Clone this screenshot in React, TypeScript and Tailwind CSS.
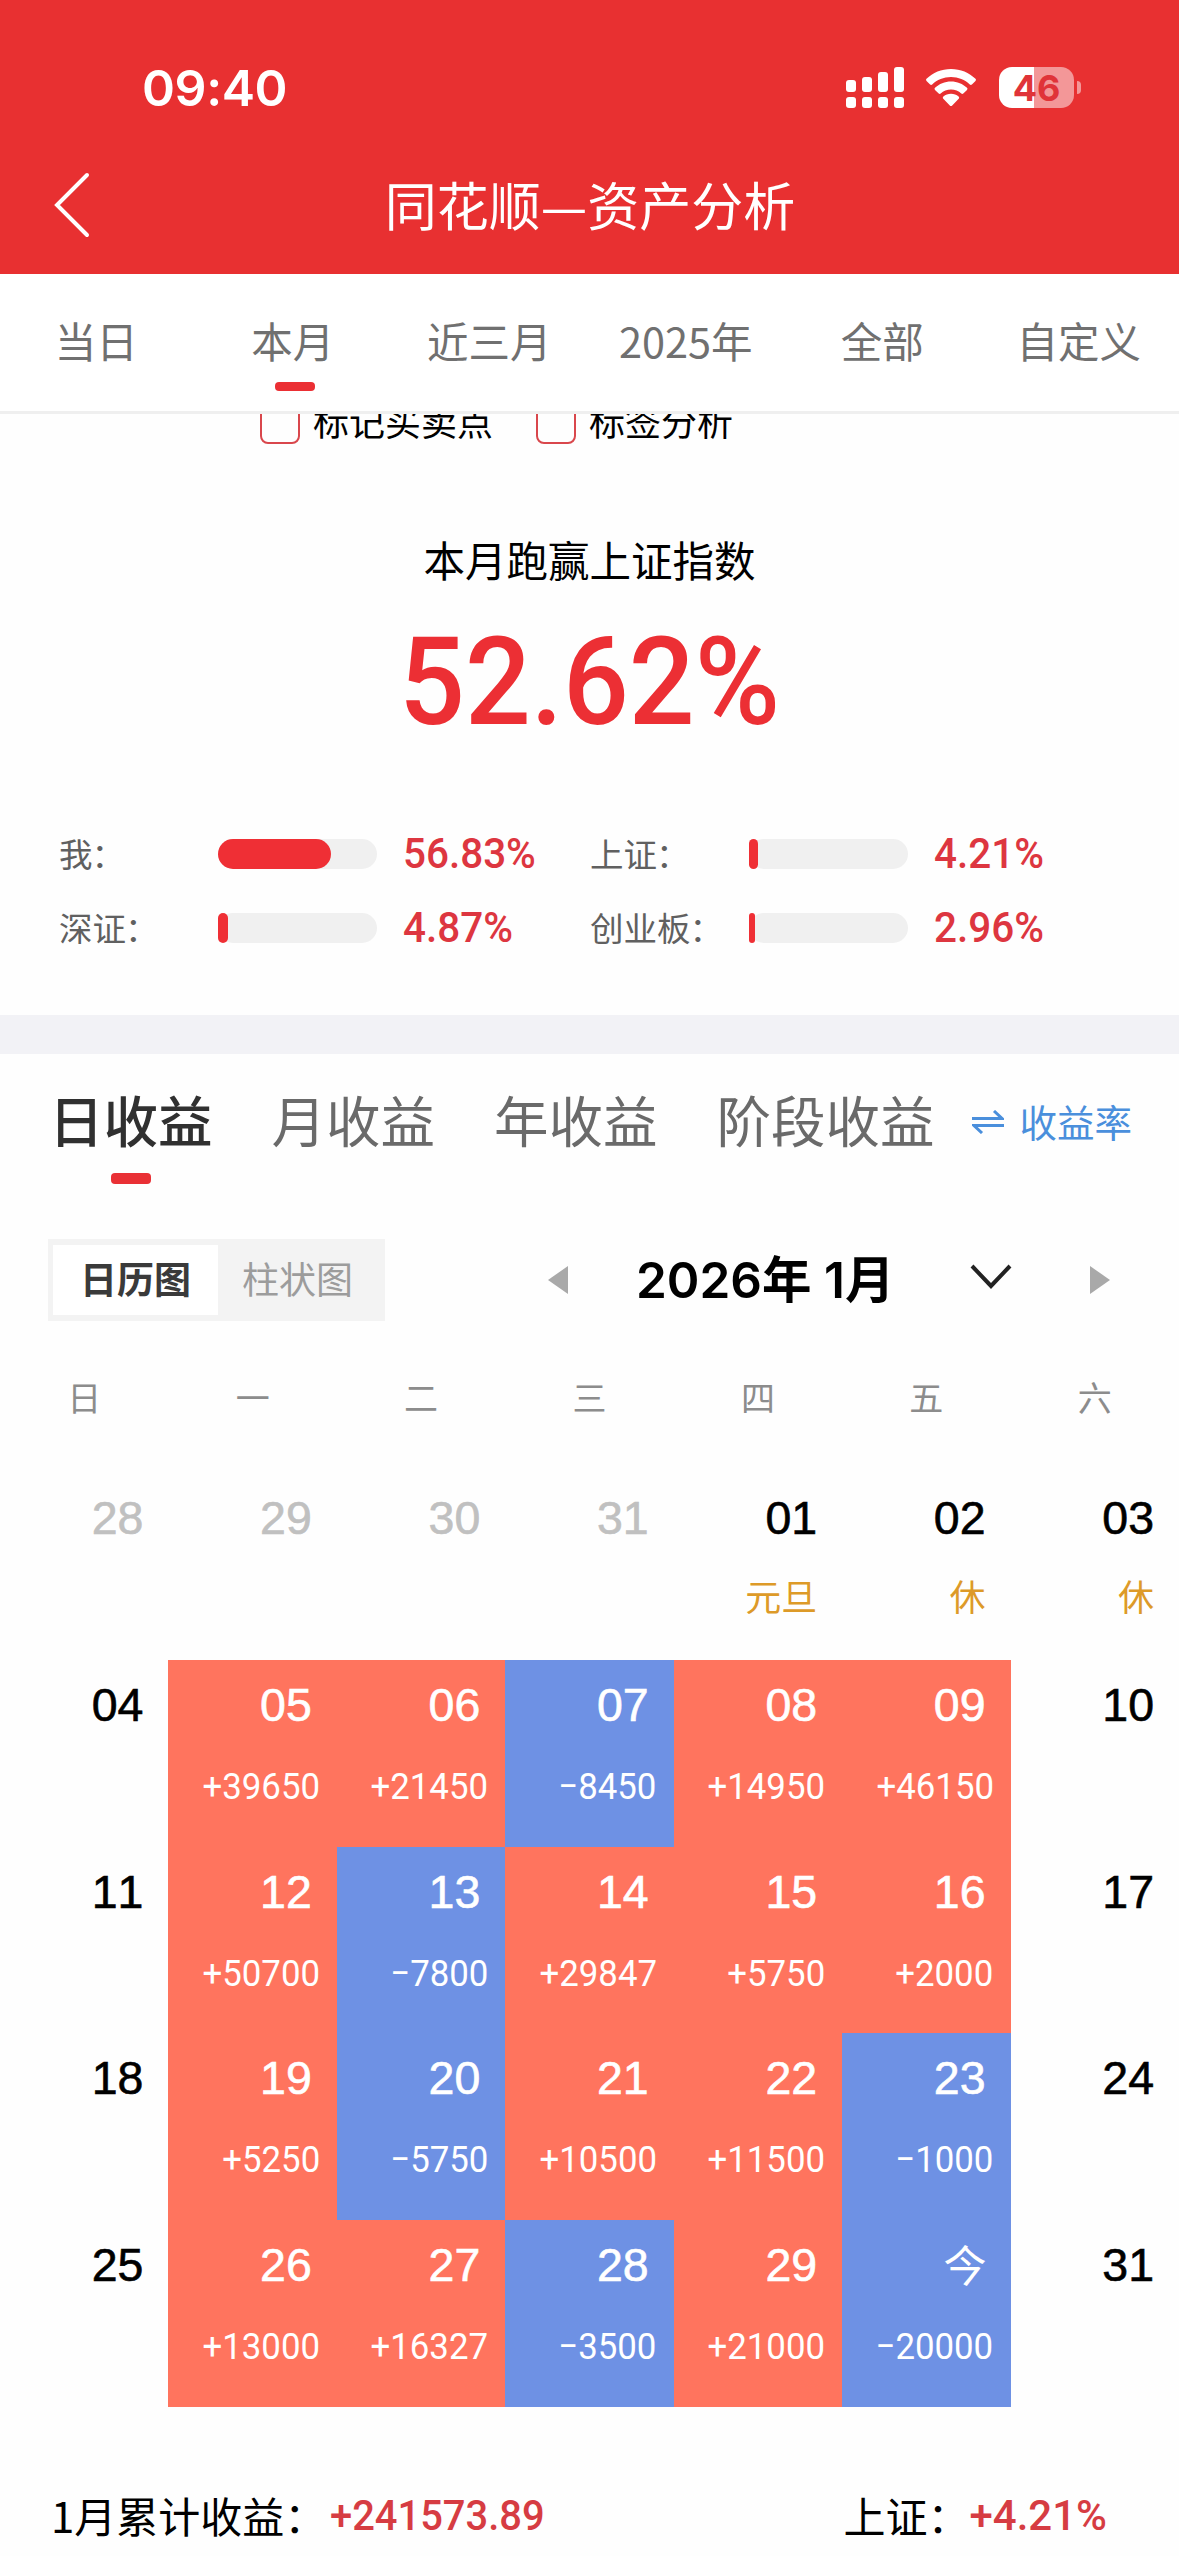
import { ReactNode } from 'react';
import clsx from 'clsx';

interface Day {
  label: string;
  amount?: number;
  holiday?: string;
  outside?: boolean;
}

interface Benchmark {
  name: string;
  value: string;
  fill: number;
}

const periods = ['当日', '本月', '近三月', '2025年', '全部', '自定义'];
const profitTabs = ['日收益', '月收益', '年收益', '阶段收益'];
const weekdays = ['日', '一', '二', '三', '四', '五', '六'];

const benchmarks: Benchmark[] = [
  { name: '我', value: '56.83%', fill: 113 },
  { name: '上证', value: '4.21%', fill: 9 },
  { name: '深证', value: '4.87%', fill: 10 },
  { name: '创业板', value: '2.96%', fill: 6 },
];

const days: Day[] = [
  { label: '28', outside: true },
  { label: '29', outside: true },
  { label: '30', outside: true },
  { label: '31', outside: true },
  { label: '01', holiday: '元旦' },
  { label: '02', holiday: '休' },
  { label: '03', holiday: '休' },
  { label: '04' },
  { label: '05', amount: 39650 },
  { label: '06', amount: 21450 },
  { label: '07', amount: -8450 },
  { label: '08', amount: 14950 },
  { label: '09', amount: 46150 },
  { label: '10' },
  { label: '11' },
  { label: '12', amount: 50700 },
  { label: '13', amount: -7800 },
  { label: '14', amount: 29847 },
  { label: '15', amount: 5750 },
  { label: '16', amount: 2000 },
  { label: '17' },
  { label: '18' },
  { label: '19', amount: 5250 },
  { label: '20', amount: -5750 },
  { label: '21', amount: 10500 },
  { label: '22', amount: 11500 },
  { label: '23', amount: -1000 },
  { label: '24' },
  { label: '25' },
  { label: '26', amount: 13000 },
  { label: '27', amount: 16327 },
  { label: '28', amount: -3500 },
  { label: '29', amount: 21000 },
  { label: '今', amount: -20000 },
  { label: '31' },
];

// 窄体数字
function Num({ children, className }: { children: ReactNode; className?: string }) {
  return (
    <span className={clsx("inline-block font-['Roboto','Noto_Sans_CJK_SC',sans-serif] leading-none whitespace-nowrap", className)}>
      {children}
    </span>
  );
}

function StatusBar() {
  return (
    <div className="flex h-[136px] items-start justify-between pl-[142px] pr-[98px] pt-[67px]">
      <span className="font-['Inter',sans-serif] text-[50px] font-semibold leading-[42px] tracking-[-0.4px]">09:40</span>
      <div className="flex h-[41px] items-center">
        <svg width="58" height="41" viewBox="0 0 58 41" fill="currentColor">
          <rect x="0" y="13" width="10" height="12" rx="3" />
          <rect x="16" y="10" width="10" height="15" rx="3" />
          <rect x="32" y="5" width="10" height="20" rx="3" />
          <rect x="48" y="0" width="10" height="25" rx="3" />
          <rect x="0" y="30" width="10" height="11" rx="3" />
          <rect x="16" y="30" width="10" height="11" rx="3" />
          <rect x="32" y="30" width="10" height="11" rx="3" />
          <rect x="48" y="30" width="10" height="11" rx="3" />
        </svg>
        <svg className="ml-[22px]" width="50" height="38" viewBox="0 0 50 38" fill="currentColor">
          <path d="M25 0C15.500 0 6.800 3.700.500 9.800c-.600.600-.600 1.500 0 2.100l3.600 3.600c.600.600 1.500.600 2.100 0C11 10.800 17.700 8 25 8s14 2.800 18.800 7.500c.600.600 1.500.600 2.100 0l3.600-3.600c.600-.600.600-1.500 0-2.100C43.200 3.700 34.500 0 25 0z" />
          <path d="M25 12.500c-6.200 0-11.800 2.400-16 6.300-.600.600-.600 1.500 0 2.100l3.700 3.700c.600.600 1.400.600 2 0 2.700-2.500 6.300-4 10.300-4s7.600 1.500 10.300 4c.600.600 1.400.600 2 0l3.700-3.700c.600-.600.600-1.500 0-2.100-4.200-3.900-9.800-6.300-16-6.300z" />
          <path d="M25 24.800c-2.900 0-5.500 1-7.600 2.800-.700.600-.700 1.600-.100 2.200l6.500 6.700c.700.700 1.700.700 2.400 0l6.500-6.700c.600-.600.600-1.600-.100-2.200-2.100-1.800-4.700-2.800-7.600-2.800z" />
        </svg>
        <div className="ml-[23px] flex h-[41px] w-[75px] items-center justify-center rounded-[13px] bg-[linear-gradient(to_right,#fff_35px,#f39798_35px)] font-['Inter',sans-serif] text-[36px] font-bold leading-none text-[#e03338]">
          46
        </div>
        <div className="ml-[3px] h-[13px] w-[4px] rounded-r-full bg-[#f39798]" />
      </div>
    </div>
  );
}

function Header() {
  return (
    <header className="h-[274px] bg-[#e83031] text-white">
      <StatusBar />
      <div className="flex h-[138px] items-center pl-[54px]">
        <svg width="36" height="66" viewBox="0 0 36 66" fill="none" stroke="currentColor" strokeWidth="4" strokeLinecap="round">
          <path d="M33 3 3 33l30 30" />
        </svg>
        <h1 className="-mt-[3px] flex-1 pr-[89px] text-center text-[52px] font-normal leading-none">同花顺—资产分析</h1>
      </div>
    </header>
  );
}

function PeriodTabs() {
  return (
    <nav className="grid h-[140px] grid-cols-6 border-b-[3px] border-[#efefef] bg-white">
      {periods.map((p) => (
        <div key={p} className="flex flex-col items-center pt-[46px]">
          <span className="-ml-1 text-[41.5px] leading-[40px] text-[#707070]">{p}</span>
          {p === '本月' && <span className="mt-[22px] h-[9px] w-[40px] rounded-[4px] bg-[#eb2f34]" />}
        </div>
      ))}
    </nav>
  );
}

function CheckOption({ label }: { label: string }) {
  return (
    <label className="flex items-center gap-[13px] text-[36px] leading-[40px]">
      <span className="h-[40px] w-[40px] rounded-[8px] border-2 border-[#d9474c]" />
      <span className="-mt-[8px]">{label}</span>
    </label>
  );
}

function Summary() {
  return (
    <section className="h-[601px] overflow-hidden">
      <div className="-mt-[10px] flex h-[40px] gap-[43px] pl-[260px]">
        <CheckOption label="标记买卖点" />
        <CheckOption label="标签分析" />
      </div>
      <p className="mt-[94px] text-center text-[41.5px] leading-[42px]">本月跑赢上证指数</p>
      <div className="mt-[42px] flex justify-center">
        <Num className="scale-x-[0.95] text-[122px] font-medium text-[#ec2f34]">52.62%</Num>
      </div>
      <div className="mt-[88px] grid grid-cols-[531px_1fr] gap-y-[31px] pl-[59px]">
        {benchmarks.map((b) => (
          <div key={b.name} className="flex h-[43px] items-center">
            <span className="-mt-[2px] w-[159px] whitespace-nowrap text-[33.5px] leading-none text-[#606060]">
              {b.name}
              <span className="-ml-px">：</span>
            </span>
            <div className="h-[30px] w-[159px] rounded-full bg-[#f0f0f0]">
              <div className="h-full rounded-full bg-[#ef2f35]" style={{ width: b.fill }} />
            </div>
            <Num className="ml-[26px] origin-left scale-x-[0.94] text-[43px] font-medium text-[#dd3640]">{b.value}</Num>
          </div>
        ))}
      </div>
    </section>
  );
}

function ProfitTabs() {
  return (
    <div className="flex h-[130px] pl-[49px] pt-[38px]">
      <div className="flex gap-[59px] text-[54.5px] leading-[54px] text-[#6a6a6a]">
        {profitTabs.map((t, i) => (
          <div key={t} className="flex flex-col items-center">
            <span className={clsx(i === 0 && 'font-medium text-[#303030]')}>{t}</span>
            {i === 0 && <span className="mt-[27px] h-[11px] w-[40px] rounded-[4px] bg-[#e93035]" />}
          </div>
        ))}
      </div>
      <div className="ml-[37px] flex h-[60px] items-center gap-[16px] text-[#4a8fdc]">
        <svg width="32" height="24" viewBox="0 0 32 24" fill="none" stroke="currentColor" strokeWidth="3">
          <path d="M0 8.500h30L22 1M32 15.500H2L10 23" />
        </svg>
        <span className="-mt-[2px] text-[37.5px] leading-none">收益率</span>
      </div>
    </div>
  );
}

function MonthBar() {
  return (
    <div className="mt-[55px] flex h-[82px] items-center pl-[48px] pr-[69px]">
      <div className="flex h-full w-[337px] items-center bg-[#f3f3f3] p-[5px] text-[37px] leading-none">
        <span className="flex h-[70px] w-[165px] items-center justify-center bg-white pb-[3px] font-bold text-[#3a3a3a]">日历图</span>
        <span className="flex-1 pb-[3px] pr-[3px] text-center text-[#9c9c9c]">柱状图</span>
      </div>
      <svg className="ml-[163px]" width="20" height="28" viewBox="0 0 20 28" fill="#a9a9a9">
        <path d="M20 0v28L0 14z" />
      </svg>
      <span className="ml-[68px] mt-[2px] whitespace-nowrap font-['Inter','Noto_Sans_CJK_SC',sans-serif] text-[49.5px] font-semibold leading-none text-black">
        2026年 1月
      </span>
      <svg className="-mt-[6px] ml-auto" width="42" height="26" viewBox="0 0 42 26" fill="none" stroke="#222" strokeWidth="4">
        <path d="m2 2 19 20L40 2" />
      </svg>
      <svg className="ml-[78px]" width="20" height="28" viewBox="0 0 20 28" fill="#a9a9a9">
        <path d="M0 0v28l20-14z" />
      </svg>
    </div>
  );
}

function DayCell({ day }: { day: Day }) {
  const { amount } = day;
  return (
    <div
      className={clsx(
        'flex flex-col items-end pt-[22px]',
        amount === undefined && (day.outside ? 'text-[#c0c0c0]' : 'text-black'),
        amount !== undefined && 'text-white',
        amount !== undefined && (amount > 0 ? 'bg-[#ff745e]' : 'bg-[#6e91e4]')
      )}
    >
      {day.label === '今' ? (
        <span className="-mt-[3px] mr-[24px] text-[43px] leading-[49px]">今</span>
      ) : (
        <span className="mr-[25px] font-['Liberation_Sans',sans-serif] text-[46.5px] leading-[46px] [font-kerning:none] [-webkit-text-stroke:0.6px_currentColor]">
          {day.label}
        </span>
      )}
      {day.holiday && <span className="mr-[25px] mt-[35px] text-[36px] leading-[38px] text-[#dd9a28]">{day.holiday}</span>}
      {amount !== undefined && (
        <Num className="mr-[17px] mt-[40px] origin-right scale-x-[0.94] text-[37px] font-[450]">
          {amount > 0 ? '+' : '−'}
          {Math.abs(amount)}
        </Num>
      )}
    </div>
  );
}

function Calendar() {
  return (
    <>
      <div className="mt-[59px] grid h-[36px] grid-cols-7 text-center text-[34px] leading-[34px] text-[#8c8c8c]">
        {weekdays.map((w) => (
          <span key={w}>{w}</span>
        ))}
      </div>
      <div className="mt-[57px] grid auto-rows-[186.8px] grid-cols-7">
        {days.map((d, i) => (
          <DayCell key={i} day={d} />
        ))}
      </div>
    </>
  );
}

export default function App() {
  return (
    <div className="h-[2556px] w-[1179px] overflow-hidden bg-[#fefefe] font-['Noto_Sans_CJK_SC',sans-serif] text-black">
      <Header />
      <PeriodTabs />
      <Summary />
      <div className="h-[39px] bg-[#f2f2f6]" />
      <ProfitTabs />
      <MonthBar />
      <Calendar />
      <footer className="mt-[88px] flex items-center pl-[51px] pr-[72px] text-[42px] leading-[42px]">
        <span className="-mt-[2px]">1月累计收益：</span>
        <Num className="ml-[4px] origin-left scale-x-[0.95] text-[42px] font-medium text-[#d63c42]">+241573.89</Num>
        <span className="-mt-[2px] ml-auto">上证：</span>
        <Num className="text-[42px] font-medium text-[#d63c42]">+4.21%</Num>
      </footer>
    </div>
  );
}
